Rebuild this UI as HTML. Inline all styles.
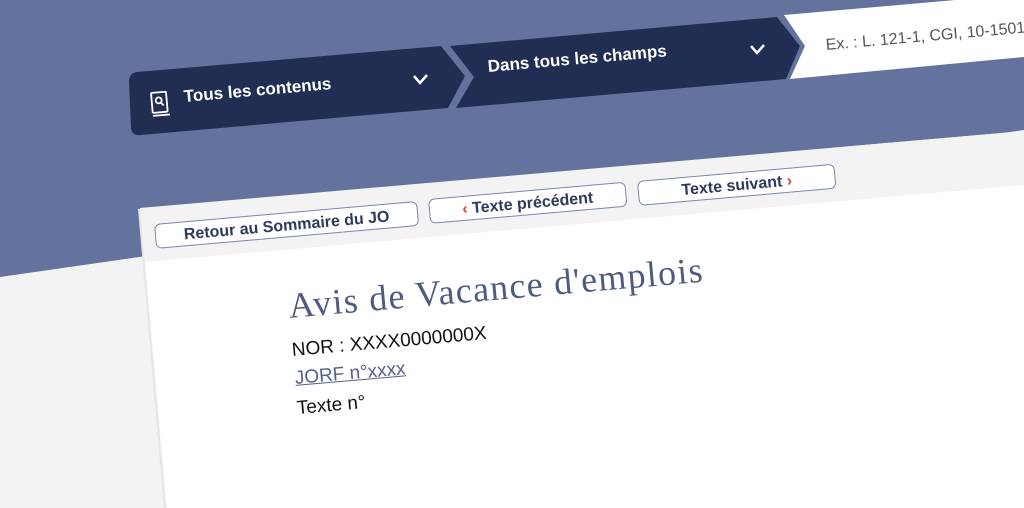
<!DOCTYPE html>
<html><head><meta charset="utf-8"><style>
html,body{margin:0;padding:0}
body{width:1024px;height:508px;overflow:hidden;position:relative;background:#f3f3f3;font-family:"Liberation Sans",sans-serif}
.r{position:absolute;transform-origin:0 0;transform:rotate(-5deg);white-space:nowrap}
.hd{color:#fff;font-weight:bold;font-size:16.5px;line-height:20px}
.btn{border:1.5px solid #7a87ad;border-radius:6px;background:#fff;color:#2e3a5c;font-weight:bold;font-size:16px;height:25px;line-height:25px;text-align:center;box-sizing:border-box}
.red{color:#d9412b}
</style></head><body>
<svg width="1024" height="508" style="position:absolute;left:0;top:0">
  <polygon points="0,0 1024,0 1024,130 0,277" fill="#63739e"/>
  <polygon points="138,209 1024,131 1024,508 164,508" fill="#e6e6e6"/>
  <polygon points="140,208 1024,131 1024,508 166,508" fill="#f3f3f3"/>
  <polygon points="145,262 1024,185 1024,508 167,508" fill="#ffffff"/>
  <path d="M137,72 L441,46 L465,76 L448,108 L141,135 Q131,136 131,127 L129,82 Q129,73 137,72 Z" fill="#202e53"/>
  <polygon points="450,46 777,17 800,46 786,79 456,108 474,77" fill="#202e53"/>
  <polygon points="784,15 1024,-6 1024,57 790,79 805,46" fill="#ffffff"/>
  <path d="M414,76 L420,83 L427,75" stroke="#fff" stroke-width="2.5" fill="none"/>
  <path d="M751,46 L757,53 L764,45" stroke="#fff" stroke-width="2.5" fill="none"/>
  <g transform="translate(151,93) rotate(-5)" stroke="#fff" stroke-width="1.8" fill="none">
    <rect x="0" y="0" width="15" height="20" rx="1"/>
    <line x1="0" y1="23" x2="17" y2="23"/>
    <circle cx="7" cy="8" r="3"/>
    <line x1="9" y1="10.5" x2="11.5" y2="13.5"/>
  </g>
</svg>
<div class="r hd" style="left:183px;top:87px;font-size:17px">Tous les contenus</div>
<div class="r hd" style="left:487px;top:57px;font-size:17px">Dans tous les champs</div>
<div class="r" style="left:825px;top:36px;color:#555;font-size:16px;line-height:20px">Ex. : L. 121-1, CGI, 10-1501</div>
<div class="r btn" style="left:154px;top:224px;width:264px">Retour au Sommaire du JO</div>
<div class="r btn" style="left:428px;top:199px;width:198px"><span class="red">‹</span> Texte précédent</div>
<div class="r btn" style="left:637px;top:181px;width:198px">Texte suivant <span class="red">›</span></div>
<div class="r" style="left:287px;top:288px;font-family:'Liberation Serif',serif;font-size:36px;line-height:36px;color:#4d5b80;letter-spacing:1.3px">Avis de Vacance d'emplois</div>
<div class="r" style="left:291px;top:340px;font-size:19px;line-height:22px;color:#111">NOR : XXXX0000000X</div>
<div class="r" style="left:294px;top:368px;font-size:19px;line-height:22px;color:#55618a;text-decoration:underline">JORF n°xxxx</div>
<div class="r" style="left:296px;top:398px;font-size:19px;line-height:22px;color:#111">Texte n°</div>
</body></html>
